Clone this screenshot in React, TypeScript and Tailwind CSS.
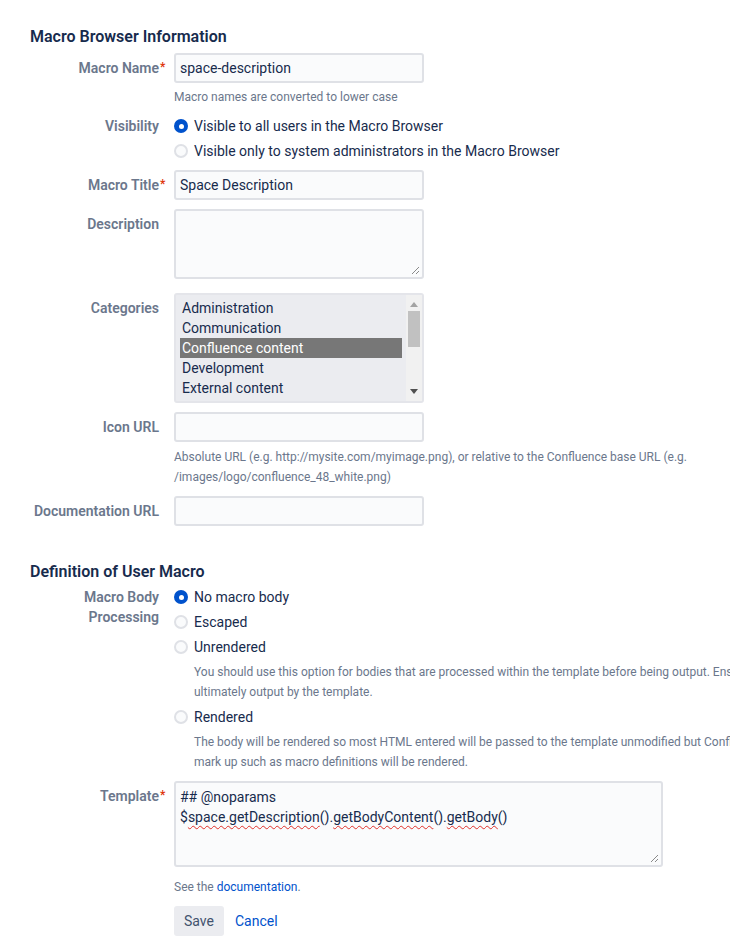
import React from 'react';

type FieldProps = {
  label: string;
  required?: boolean;
  radios?: boolean;
  children: React.ReactNode;
};

const Field: React.FC<FieldProps> = ({ label, required, radios, children }) => (
  <div className="mt-[1px] flex py-[4px]">
    <div
      className={`mr-[15px] w-[129px] shrink-0 text-right text-[14px] font-semibold leading-[20px] text-[#6B778C] ${
        radios ? '' : 'pt-[5px]'
      }`}
    >
      <span className="relative">
        {label}
        {required && (
          <span className="absolute left-full top-[-3px] pl-[1px] text-[12px] text-[#DE350B]">*</span>
        )}
      </span>
    </div>
    <div className="min-w-0 flex-1">{children}</div>
  </div>
);

const TextInput: React.FC<{ value?: string }> = ({ value }) => (
  <div className="h-[30px] w-[250px] rounded-[3px] border-2 border-[#DFE1E6] bg-[#FAFBFC] px-[4px] text-[14px] leading-[26px] text-[#172B4D]">
    {value}
  </div>
);

const Grip: React.FC = () => (
  <svg className="absolute bottom-[2px] right-[2px]" width="9" height="9" viewBox="0 0 9 9">
    <line x1="1" y1="8" x2="8" y2="1" stroke="#8a8a8a" strokeWidth="1" />
    <line x1="5" y1="8" x2="8" y2="5" stroke="#8a8a8a" strokeWidth="1" />
  </svg>
);

const Help: React.FC<{ children: React.ReactNode; className?: string }> = ({ children, className }) => (
  <div className={`whitespace-nowrap text-[12px] leading-[20px] text-[#6B778C] ${className ?? ''}`}>{children}</div>
);

const Radio: React.FC<{ checked?: boolean; label: string }> = ({ checked, label }) => (
  <div className="flex h-[20px] items-center">
    {checked ? (
      <span className="flex h-[14px] w-[14px] items-center justify-center rounded-full bg-[#0052CC]">
        <span className="h-[5px] w-[5px] rounded-full bg-white" />
      </span>
    ) : (
      <span className="h-[14px] w-[14px] rounded-full border-2 border-[#DFE1E6] bg-[#FAFBFC]" />
    )}
    <span className="ml-[6px] whitespace-nowrap text-[14px] leading-[20px] text-[#172B4D]">{label}</span>
  </div>
);

const categories = ['Administration', 'Communication', 'Confluence content', 'Development', 'External content'];

const Spell: React.FC<{ children: React.ReactNode }> = ({ children }) => (
  <span className="underline decoration-[#e0302a] decoration-wavy decoration-1 underline-offset-[3px]">{children}</span>
);

export default function App() {
  return (
    <div className="h-[952px] w-[730px] overflow-hidden bg-white pl-[30px] pt-[27px] font-[Roboto,sans-serif]">
      <h3 className="mb-[2px] text-[16px] font-semibold leading-[20px] text-[#172B4D]">Macro Browser Information</h3>

      <Field label="Macro Name" required>
        <TextInput value="space-description" />
        <Help className="mt-[4px]">Macro names are converted to lower case</Help>
      </Field>

      <Field label="Visibility" radios>
        <div className="flex flex-col gap-[5px]">
          <Radio checked label="Visible to all users in the Macro Browser" />
          <Radio label="Visible only to system administrators in the Macro Browser" />
        </div>
      </Field>

      <Field label="Macro Title" required>
        <TextInput value="Space Description" />
      </Field>

      <Field label="Description">
        <div className="relative mb-[5px] h-[70px] w-[250px] rounded-[3px] border-2 border-[#DFE1E6] bg-[#FAFBFC]">
          <Grip />
        </div>
      </Field>

      <Field label="Categories">
        <div className="flex h-[110px] w-[250px] rounded-[3px] border-2 border-[#E4E5EA] bg-[#EBECF0]">
          <div className="flex-1 px-[4px] pt-[3px]">
            {categories.map((c) => (
              <div
                key={c}
                className={`px-[2px] text-[14px] leading-[20px] ${
                  c === 'Confluence content' ? 'bg-[#777777] text-white' : 'text-[#172B4D]'
                }`}
              >
                {c}
              </div>
            ))}
          </div>
          <div className="flex w-[16px] flex-col items-center bg-[#F1F1F1] py-[4px]">
            <svg width="8" height="5" viewBox="0 0 8 5" className="mt-[3px]">
              <polygon points="4,0 8,5 0,5" fill="#a3a3a3" />
            </svg>
            <div className="mt-[4px] h-[36px] w-[12px] bg-[#C1C1C1]" />
            <div className="flex-1" />
            <svg width="8" height="5" viewBox="0 0 8 5" className="mb-[3px]">
              <polygon points="0,0 8,0 4,5" fill="#505050" />
            </svg>
          </div>
        </div>
      </Field>

      <Field label="Icon URL">
        <TextInput />
        <Help className="mt-[5px]">
          Absolute URL (e.g. http://mysite.com/myimage.png), or relative to the Confluence base URL (e.g.
          <br />
          /images/logo/confluence_48_white.png)
        </Help>
      </Field>

      <Field label="Documentation URL">
        <TextInput />
      </Field>

      <h3 className="mt-[32px] text-[16px] font-semibold leading-[20px] text-[#172B4D]">Definition of User Macro</h3>

      <Field label="Macro Body Processing" radios>
        <div className="flex flex-col gap-[5px]">
          <Radio checked label="No macro body" />
          <Radio label="Escaped" />
          <Radio label="Unrendered" />
          <Help className="ml-[20px]">
            You should use this option for bodies that are processed within the template before being output. Ensure that HTML is
            <br />
            ultimately output by the template.
          </Help>
          <Radio label="Rendered" />
          <Help className="ml-[20px]">
            The body will be rendered so most HTML entered will be passed to the template unmodified but Confluence specific
            <br />
            mark up such as macro definitions will be rendered.
          </Help>
        </div>
      </Field>

      <Field label="Template" required>
        <div className="relative h-[86px] w-[489px] rounded-[3px] border-2 border-[#DFE1E6] bg-[#FAFBFC] px-[4px] pt-[4px] text-[14px] leading-[20px] text-[#172B4D]">
          <div>## @noparams</div>
          <div>
            $<Spell>space.getDescription</Spell>().<Spell>getBodyContent</Spell>().<Spell>getBody</Spell>()
          </div>
          <Grip />
        </div>
        <Help className="mt-[10px]">
          See the <span className="text-[#0052CC]">documentation</span>.
        </Help>
      </Field>

      <div className="mt-[1px] flex py-[4px] pl-[144px]">
        <button className="h-[30px] rounded-[3px] bg-[#EBECF0] px-[10px] text-[14px] text-[#42526E]">Save</button>
        <a className="ml-[11px] text-[14px] leading-[30px] text-[#0052CC]">Cancel</a>
      </div>
    </div>
  );
}
